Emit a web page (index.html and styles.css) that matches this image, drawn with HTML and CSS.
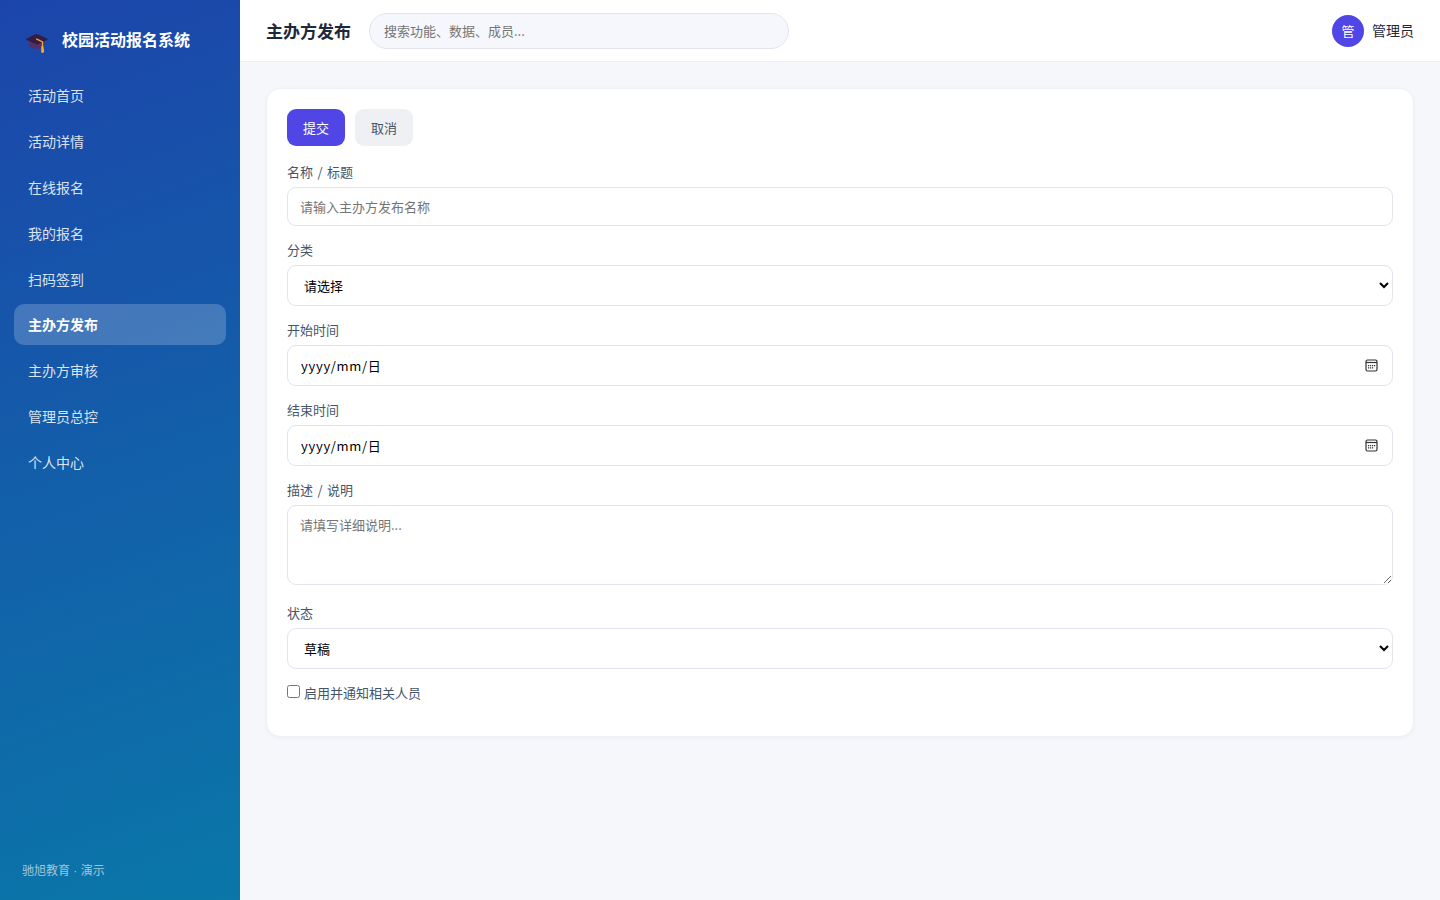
FILE: index.html
```html
<!DOCTYPE html>
<html lang="zh-CN">
<head>
<meta charset="utf-8">
<title>校园活动报名系统</title>
<link rel="stylesheet" href="styles.css">
</head>
<body>
<div class="app">
  <aside class="sidebar">
    <div class="brand">
      <svg class="brand-icon" width="24" height="24" viewBox="0 0 24 24">
        <path d="M4 9.500v5.200c0 1.800 3.600 4 8 4s7-1.500 7-3.500V10z" fill="#533064"/>
        <path d="M1.300 8.800 10.300 4.200q1.200-.5 2.400 0l9.800 4.500q.7.400 0 .9l-9.300 4.600q-1 .5-2 0L1.300 9.700q-.6-.4 0-.9z" fill="#351c43"/>
        <path d="M11.200 8.900 17.500 11.800V17" fill="none" stroke="#f5a62b" stroke-width="1.300"/>
        <path d="M16.200 16.200h2.200l.8 5.600-1.300 1.200-1.700-.6z" fill="#fba92e"/>
      </svg>
      <span>校园活动报名系统</span>
    </div>
    <nav class="nav">
      <a class="nav-item">活动首页</a>
      <a class="nav-item">活动详情</a>
      <a class="nav-item">在线报名</a>
      <a class="nav-item">我的报名</a>
      <a class="nav-item">扫码签到</a>
      <a class="nav-item active">主办方发布</a>
      <a class="nav-item">主办方审核</a>
      <a class="nav-item">管理员总控</a>
      <a class="nav-item">个人中心</a>
    </nav>
    <div class="sidebar-foot">驰旭教育 · 演示</div>
  </aside>
  <div class="main">
    <header class="topbar">
      <h1 class="title">主办方发布</h1>
      <input class="search" placeholder="搜索功能、数据、成员...">
      <div class="user"><span class="avatar">管</span><span>管理员</span></div>
    </header>
    <main class="content">
      <form class="card">
        <div class="actions">
          <button type="button" class="btn primary">提交</button>
          <button type="button" class="btn">取消</button>
        </div>
        <div class="field">
          <label class="label">名称 / 标题</label>
          <input class="control" placeholder="请输入主办方发布名称">
        </div>
        <div class="field">
          <label class="label">分类</label>
          <select class="control tall"><option>请选择</option></select>
        </div>
        <div class="field">
          <label class="label">开始时间</label>
          <div class="control tall date"><span class="date-text">yyyy/mm/日</span>
            <svg width="13" height="13" viewBox="0 0 13 13"><rect x="1" y="1" width="11" height="11" rx="1.500" fill="none" stroke="#333" stroke-width="1.200"/><path d="M1 3.500h11" stroke="#333" stroke-width="1.200"/><path d="M5 6h1.200v1.200H5zM7 6h1.200v1.200H7zM9 6h1.200v1.200H9zM3 6h1.200v1.200H3zM3 8.300h1.200v1.200H3zM5 8.300h1.200v1.200H5zM7 8.300h1.200v1.200H7z" fill="#333"/></svg>
          </div>
        </div>
        <div class="field">
          <label class="label">结束时间</label>
          <div class="control tall date"><span class="date-text">yyyy/mm/日</span>
            <svg width="13" height="13" viewBox="0 0 13 13"><rect x="1" y="1" width="11" height="11" rx="1.500" fill="none" stroke="#333" stroke-width="1.200"/><path d="M1 3.500h11" stroke="#333" stroke-width="1.200"/><path d="M5 6h1.200v1.200H5zM7 6h1.200v1.200H7zM9 6h1.200v1.200H9zM3 6h1.200v1.200H3zM3 8.300h1.200v1.200H3zM5 8.300h1.200v1.200H5zM7 8.300h1.200v1.200H7z" fill="#333"/></svg>
          </div>
        </div>
        <div class="field area">
          <label class="label">描述 / 说明</label>
          <textarea class="control textarea" placeholder="请填写详细说明..."></textarea>
        </div>
        <div class="field">
          <label class="label">状态</label>
          <select class="control tall"><option>草稿</option></select>
        </div>
        <label class="check"><input type="checkbox" class="box"><span>启用并通知相关人员</span></label>
      </form>
    </main>
  </div>
</div>
</body>
</html>
```
FILE: styles.css
```css
* { box-sizing: border-box; }
body {
  margin: 0;
  background: #f5f7fb;
  color: #1e293b;
  font: 14px/1.5 "Noto Sans CJK SC", sans-serif;
}
.app { display: flex; height: 900px; }
.sidebar {
  display: flex;
  flex-direction: column;
  width: 240px;
  padding: 22px 14px 19px;
  background: linear-gradient(160deg, #1c45ab, #0a77a8);
  color: #fff;
}
.brand {
  display: flex;
  align-items: center;
  gap: 13px;
  height: 34px;
  margin-bottom: 18.500px;
  padding-left: 11px;
  font-size: 16px;
  font-weight: 700;
}
.brand-icon { margin-top: 6px; }
.nav { display: flex; flex-direction: column; gap: 5px; }
.nav-item {
  display: flex;
  align-items: center;
  height: 40.900px;
  padding: 1px 14px 0;
  border-radius: 10px;
  color: rgba(255, 255, 255, .85);
}
.nav-item.active {
  background: rgba(255, 255, 255, .2);
  color: #fff;
  font-weight: 700;
}
.sidebar-foot {
  margin-top: auto;
  padding-left: 8px;
  font-family: "Liberation Sans", "Noto Sans CJK SC", sans-serif;
  font-size: 12px;
  line-height: 20px;
  color: rgba(255, 255, 255, .6);
}
.main { flex: 1; min-width: 0; }
.topbar {
  display: flex;
  align-items: center;
  height: 62px;
  padding: 0 26px;
  background: #fff;
  border-bottom: 1px solid #eceef3;
}
.title { margin: 0 18px 0 0; font-size: 17px; line-height: 26px; }
.search {
  width: 420px;
  height: 36px;
  padding: 0 14px;
  border: 1px solid #e2e5ee;
  border-radius: 18px;
  background: #f6f7fc;
  font: 13px "Noto Sans CJK SC", sans-serif;
}
::placeholder { color: #757575; }
.user { display: flex; align-items: center; gap: 8px; margin-left: auto; }
.avatar {
  display: grid;
  place-items: center;
  width: 32px;
  height: 32px;
  border-radius: 50%;
  background: #4f46e5;
  color: #fff;
  font-size: 13px;
}
.content { padding: 26px; }
.card {
  height: 649px;
  padding: 20px;
  border: 1px solid #eef0f5;
  border-radius: 14px;
  background: #fff;
  box-shadow: 0 1px 4px rgba(30, 41, 80, .04);
}
.actions { display: flex; gap: 10px; margin-bottom: 15px; }
.btn {
  width: 58px;
  height: 37px;
  padding: 0 0 1px;
  border: 0;
  border-radius: 9px;
  background: #eef0f4;
  color: #475569;
  font: 13px "Noto Sans CJK SC", sans-serif;
}
.btn.primary { background: #4f46e5; color: #fff; }
.field { margin-bottom: 13px; }
.field.area { margin-bottom: 17px; }
.label {
  display: block;
  height: 21px;
  margin-bottom: 5px;
  font-size: 13px;
  line-height: 21px;
  word-spacing: 1.500px;
  color: #475569;
}
.control {
  display: block;
  width: 100%;
  height: 39px;
  padding: 0 12px;
  border: 1px solid #e2e5ee;
  border-radius: 9px;
  background-color: #fff;
  color: #000;
  font: 13px "Noto Sans CJK SC", sans-serif;
}
.control.tall { height: 41px; }
.control.date {
  display: flex;
  align-items: center;
  justify-content: space-between;
  padding: 0 14px 0 13px;
}
.date-text { letter-spacing: .7px; }
.control.textarea { height: 80px; padding: 9px 12px; resize: vertical; }
.check {
  display: flex;
  align-items: center;
  gap: 4px;
  height: 21px;
  font-size: 13px;
  color: #475569;
}
.box { width: 13px; height: 13px; margin: 0 0 2px; }
```
